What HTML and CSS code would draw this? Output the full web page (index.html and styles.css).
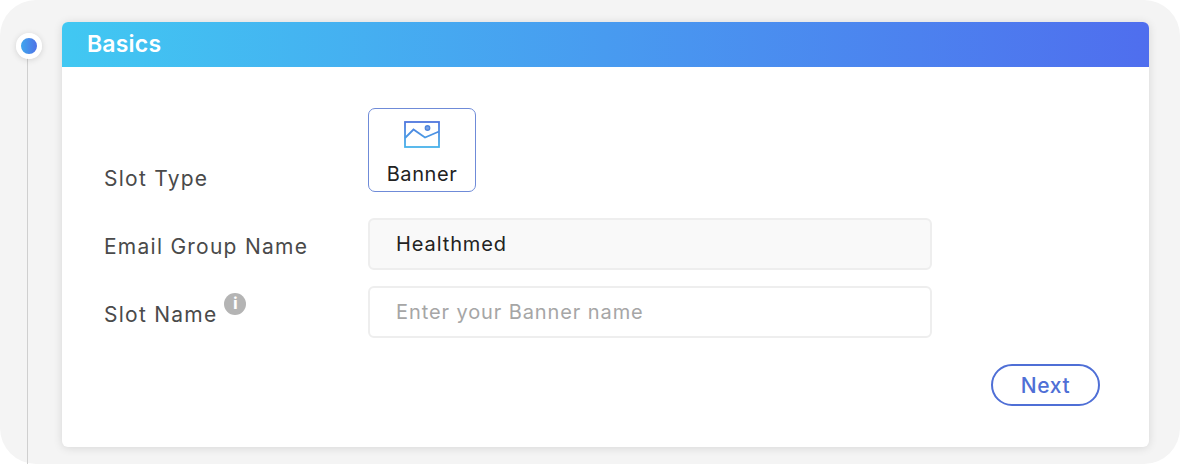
FILE: index.html
```html
<!DOCTYPE html>
<html lang="en">
<head>
<meta charset="utf-8">
<title>Basics</title>
<link rel="stylesheet" href="styles.css">
</head>
<body>
<main class="shell">
  <div class="timeline" aria-hidden="true"><span class="dot"></span></div>
  <section class="card">
    <header class="card-head">Basics</header>
    <form class="form">
      <div class="row row-type">
        <span class="label">Slot Type</span>
        <div class="tile">
          <svg class="tile-icon" width="36" height="27" viewBox="0 0 36 27" fill="none">
            <defs>
              <linearGradient id="g" gradientUnits="userSpaceOnUse" x1="0" y1="0" x2="0" y2="27">
                <stop offset="0" stop-color="#4f74dd"/>
                <stop offset="1" stop-color="#48b4ea"/>
              </linearGradient>
            </defs>
            <rect x="1" y="1" width="34" height="25" stroke="url(#g)" stroke-width="1.8"/>
            <path d="M1 17 L9.5 8.5 L21 16.5 L35 10.5" stroke="url(#g)" stroke-width="1.8"/>
            <circle cx="23.5" cy="7" r="2.2" fill="#7fa3e6" stroke="#4f86dd" stroke-width="1.4"/>
          </svg>
          <span class="tile-text">Banner</span>
        </div>
      </div>
      <div class="row row-input">
        <span class="label">Email Group Name</span>
        <div class="field field-filled">Healthmed</div>
      </div>
      <div class="row row-input">
        <span class="label label-info">Slot Name<span class="info">i</span></span>
        <div class="field field-empty">Enter your Banner name</div>
      </div>
      <div class="actions"><button type="button" class="next">Next</button></div>
    </form>
  </section>
</main>
</body>
</html>
```
FILE: styles.css
```css
* { box-sizing: border-box; }
html, body { margin: 0; background: #fff; }
body { width: 1180px; height: 464px; overflow: hidden; font-family: Inter, "Liberation Sans", sans-serif; }
.shell {
  position: relative;
  width: 1180px;
  height: 464px;
  padding: 22px 31px 17px 62px;
  background: #f4f4f4;
  border-radius: 36px;
}
.timeline {
  position: absolute;
  left: 27px;
  top: 45px;
  bottom: 0;
  width: 1px;
  background: #cfcfcf;
}
.dot {
  position: absolute;
  left: -11px;
  top: -12px;
  width: 26px;
  height: 26px;
  border: 5px solid #fff;
  border-radius: 50%;
  background: linear-gradient(90deg, #3fa6ee, #4f72e6);
  box-shadow: 0 1px 6px rgba(0, 0, 0, .14);
}
.card {
  height: 425px;
  background: #fff;
  border-radius: 6px;
  box-shadow: 0 1px 10px rgba(0, 0, 0, .12);
  overflow: hidden;
}
.card-head {
  height: 45px;
  padding-left: 25px;
  background: linear-gradient(90deg, #41c8f2, #4f6eee);
  color: #fff;
  font-size: 23px;
  font-weight: 600;
  letter-spacing: .2px;
  line-height: 44px;
}
.form { padding: 41px 49px 0 42px; }
.row { display: grid; grid-template-columns: 264px 564px; }
.row-type { align-items: end; height: 84px; }
.row-input { align-items: center; height: 52px; margin-top: 16px; }
.row-type + .row-input { margin-top: 26px; }
.label {
  color: #4a4a4a;
  font-size: 21px;
  letter-spacing: 1.25px;
  line-height: 28px;
}
.row-type .label { line-height: 26px; }
.row-input .label { padding-top: 6px; }
.label-info { display: flex; align-items: flex-start; }
.info {
  width: 22px;
  height: 22px;
  margin: -8px 0 0 7px;
  border-radius: 50%;
  background: #b4b4b4;
  color: #fff;
  font-size: 15px;
  font-weight: 800;
  letter-spacing: 0;
  line-height: 22px;
  text-align: center;
}
.tile {
  display: flex;
  flex-direction: column;
  align-items: center;
  width: 108px;
  height: 84px;
  padding-top: 12px;
  border: 1px solid #6f8bd8;
  border-radius: 7px;
}
.tile-icon { display: block; }
.tile-text {
  margin-top: 13px;
  color: #222;
  font-size: 20px;
  letter-spacing: .6px;
  line-height: 26px;
}
.field {
  height: 52px;
  padding-left: 26px;
  border: 2px solid #eee;
  border-radius: 6px;
  font-size: 20px;
  letter-spacing: .9px;
  line-height: 48px;
}
.field-filled { background: #f9f9f9; color: #222; }
.field-empty { background: #fff; color: #a6a6a6; }
.actions { display: flex; justify-content: flex-end; margin-top: 26px; }
.next {
  width: 109px;
  height: 42px;
  padding: 0;
  border: 2px solid #4f6fd6;
  border-radius: 21px;
  background: #fff;
  color: #4f6fd6;
  font-family: inherit;
  font-size: 21px;
  font-weight: 500;
  letter-spacing: .6px;
}
```
